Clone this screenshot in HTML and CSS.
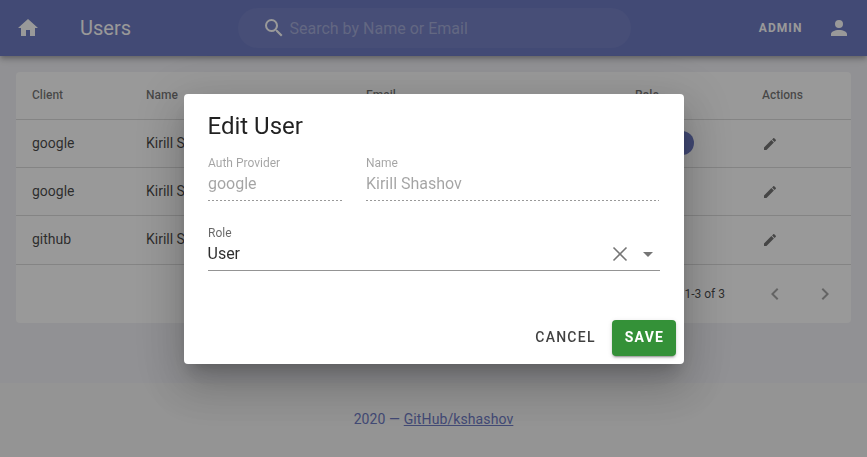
FILE: index.html
```html
<!DOCTYPE html>
<html lang="en">
<head>
<meta charset="utf-8">
<title>Users</title>
<link rel="stylesheet" href="styles.css">
</head>
<body>
<svg class="defs" aria-hidden="true">
  <symbol id="pencil" viewBox="0 0 24 24"><path d="M20.71 7.04c.39-.39.39-1.04 0-1.41l-2.34-2.34c-.37-.39-1.02-.39-1.41 0l-1.84 1.83 3.75 3.75M3 17.25V21h3.75L17.81 9.93l-3.75-3.75L3 17.25z"/></symbol>
</svg>
<div class="app">
  <header class="bar">
    <svg class="icon home" viewBox="0 0 24 24"><path d="M10 20v-6h4v6h5v-8h3L12 3 2 12h3v8h5z"/></svg>
    <h1 class="title">Users</h1>
    <div class="search">
      <svg class="icon" viewBox="0 0 24 24"><path d="M9.5 3A6.5 6.5 0 0 1 16 9.5c0 1.61-.59 3.09-1.56 4.23l.27.27h.79l5 5-1.5 1.5-5-5v-.79l-.27-.27A6.516 6.516 0 0 1 9.5 16 6.5 6.5 0 0 1 3 9.5 6.5 6.5 0 0 1 9.5 3m0 2C7 5 5 7 5 9.5S7 14 9.5 14 14 12 14 9.5 12 5 9.5 5z"/></svg>
      <span class="placeholder">Search by Name or Email</span>
    </div>
    <span class="admin">ADMIN</span>
    <svg class="icon" viewBox="0 0 24 24"><path d="M12 4a4 4 0 0 1 4 4 4 4 0 0 1-4 4 4 4 0 0 1-4-4 4 4 0 0 1 4-4m0 10c4.42 0 8 1.79 8 4v2H4v-2c0-2.21 3.58-4 8-4z"/></svg>
  </header>
  <main class="main">
    <section class="card">
      <div class="row head"><span>Client</span><span>Name</span><span>Email</span><span>Role</span><span>Actions</span></div>
      <div class="row"><span>google</span><span>Kirill Shashov</span><span></span><span><i class="chip"></i></span><span><svg class="pencil"><use href="#pencil"/></svg></span></div>
      <div class="row"><span>google</span><span>Kirill Shashov</span><span></span><span></span><span><svg class="pencil"><use href="#pencil"/></svg></span></div>
      <div class="row last"><span>github</span><span>Kirill Shashov</span><span></span><span></span><span><svg class="pencil"><use href="#pencil"/></svg></span></div>
      <div class="pager">
        <span class="count">1-3 of 3</span>
        <svg class="icon" viewBox="0 0 24 24"><path d="M15.41 16.58 10.83 12l4.58-4.59L14 6l-6 6 6 6 1.41-1.42z"/></svg>
        <svg class="icon" viewBox="0 0 24 24"><path d="M8.59 16.58 13.17 12 8.59 7.41 10 6l6 6-6 6-1.41-1.42z"/></svg>
      </div>
    </section>
  </main>
  <footer class="footer"><span>2020 — <a href="#">GitHub/kshashov</a></span></footer>
</div>
<div class="overlay">
  <div class="dialog" role="dialog">
    <h2 class="dialog-title">Edit User</h2>
    <div class="fields">
      <div class="field disabled"><label>Auth Provider</label><div class="value">google</div></div>
      <div class="field disabled"><label>Name</label><div class="value">Kirill Shashov</div></div>
    </div>
    <div class="field role">
      <label>Role</label>
      <div class="value"><span class="grow">User</span>
        <svg class="icon close" viewBox="0 0 24 24"><path d="M5.5 5.5l13 13M18.5 5.5l-13 13"/></svg>
        <svg class="icon" viewBox="0 0 24 24"><path d="M7 10l5 5 5-5H7z"/></svg>
      </div>
    </div>
    <div class="actions"><button class="btn cancel">CANCEL</button><button class="btn save">SAVE</button></div>
  </div>
</div>
</body>
</html>
```
FILE: styles.css
```css
* { box-sizing: border-box; }
body { margin: 0; font-family: Roboto, sans-serif; color: rgba(0,0,0,.87); overflow: hidden; }
.defs { position: absolute; width: 0; height: 0; }
.icon { width: 24px; height: 24px; fill: currentColor; flex: none; }
.app { height: 457px; display: flex; flex-direction: column; background: #f0f0f5; }
.bar {
  height: 56px; flex: none; display: flex; align-items: center; padding: 0 16px;
  background: #5f6dbd; color: #fff; z-index: 1;
  box-shadow: 0 2px 4px -1px rgba(0,0,0,.2), 0 4px 5px 0 rgba(0,0,0,.14), 0 1px 10px 0 rgba(0,0,0,.12);
}
.title { margin: 0 0 0 40px; width: 158px; font-size: 20px; font-weight: 400; line-height: 30px; }
.search { width: 393px; height: 40px; border-radius: 20px; background: rgba(255,255,255,.06); display: flex; align-items: center; padding-left: 24px; }
.placeholder { margin-left: 3.5px; font-size: 16px; color: rgba(255,255,255,.35); }
.admin { margin: 0 24.5px 0 auto; font-size: 12px; font-weight: 700; letter-spacing: 1.07px; }
.main { flex: none; height: 327px; padding: 16px; }
.card { background: #fff; border-radius: 4px; height: 251px; }
.row {
  display: grid; grid-template-columns: 114px 220px 269px 127px 1fr; height: 48px;
  align-items: center; padding: 0 0 1px 16px; font-size: 14px; color: rgba(0,0,0,.8); border-bottom: 1px solid rgba(0,0,0,.15);
}
.row span { display: flex; align-items: center; }
.head { font-size: 12px; font-weight: 500; color: rgba(0,0,0,.6); }
.last { border-bottom-color: transparent; }
.chip { width: 59px; height: 24px; border-radius: 12px; background: #5f6dbd; }
.pencil { width: 16px; height: 16px; fill: rgba(0,0,0,.6); margin-top: 2px; }
.pager { height: 59px; border-top: 1px solid rgba(0,0,0,.15); display: flex; align-items: center; justify-content: flex-end; padding-right: 14px; gap: 26px; font-size: 12px; color: rgba(0,0,0,.8); }
.count { margin-right: 12px; }
.pager .icon { fill: rgba(0,0,0,.38); }
.footer { flex: 1; display: flex; align-items: center; justify-content: center; padding-bottom: 2px; background: #f5f5f5; color: #5f6dbd; font-size: 14px; letter-spacing: .1px; }
.footer a { color: inherit; }
.overlay { position: fixed; inset: 0; z-index: 5; background: rgba(33,33,33,.46); display: flex; align-items: center; justify-content: center; }
.dialog {
  width: 500px; height: 270px; margin-top: 1px; margin-left: 1px; background: #fff; border-radius: 4px; padding: 16px 24px 8px;
  display: flex; flex-direction: column;
  box-shadow: 0 11px 15px -7px rgba(0,0,0,.2), 0 24px 38px 3px rgba(0,0,0,.14), 0 9px 46px 8px rgba(0,0,0,.12);
}
.dialog-title { margin: 0 0 0 -.5px; font-size: 24px; line-height: 32px; font-weight: 400; }
.fields { display: grid; grid-template-columns: 134px 1fr; gap: 24px; margin: 11px 1px 0 0; }
.field label { display: block; font-size: 12px; line-height: 20px; color: rgba(0,0,0,.6); }
.value { height: 28px; display: flex; align-items: center; padding-bottom: 5px; font-size: 16px; line-height: 20px; color: rgba(0,0,0,.82); border-bottom: 1px solid rgba(0,0,0,.42); }
.disabled label { color: rgba(0,0,0,.36); }
.disabled .value {
  color: rgba(0,0,0,.36); border: 0; padding-bottom: 6px;
  background: repeating-linear-gradient(to right, rgba(0,0,0,.4) 0 2px, transparent 2px 4px) left bottom / 100% 1px no-repeat;
}
.role { margin-top: 22px; }
.grow { flex: 1; margin-left: -.5px; }
.role .icon { fill: rgba(0,0,0,.54); margin-left: 4px; }
.role .icon:last-child { margin-right: .5px; }
.role .close { fill: none; stroke: rgba(0,0,0,.54); stroke-width: 1.6; }
.actions { margin: auto -16px 0 0; display: flex; justify-content: flex-end; gap: 4px; }
.btn { height: 36px; border: 0; border-radius: 4px; padding: 0 0 2px 1px; font: 500 14px Roboto, sans-serif; letter-spacing: 1.25px; text-align: center; }
.cancel { width: 86px; background: transparent; color: rgba(0,0,0,.75); }
.save { width: 64px; background: #349138; color: #fff; font-weight: 700; box-shadow: 0 3px 1px -2px rgba(0,0,0,.2), 0 2px 2px 0 rgba(0,0,0,.14), 0 1px 5px 0 rgba(0,0,0,.12); }
```
